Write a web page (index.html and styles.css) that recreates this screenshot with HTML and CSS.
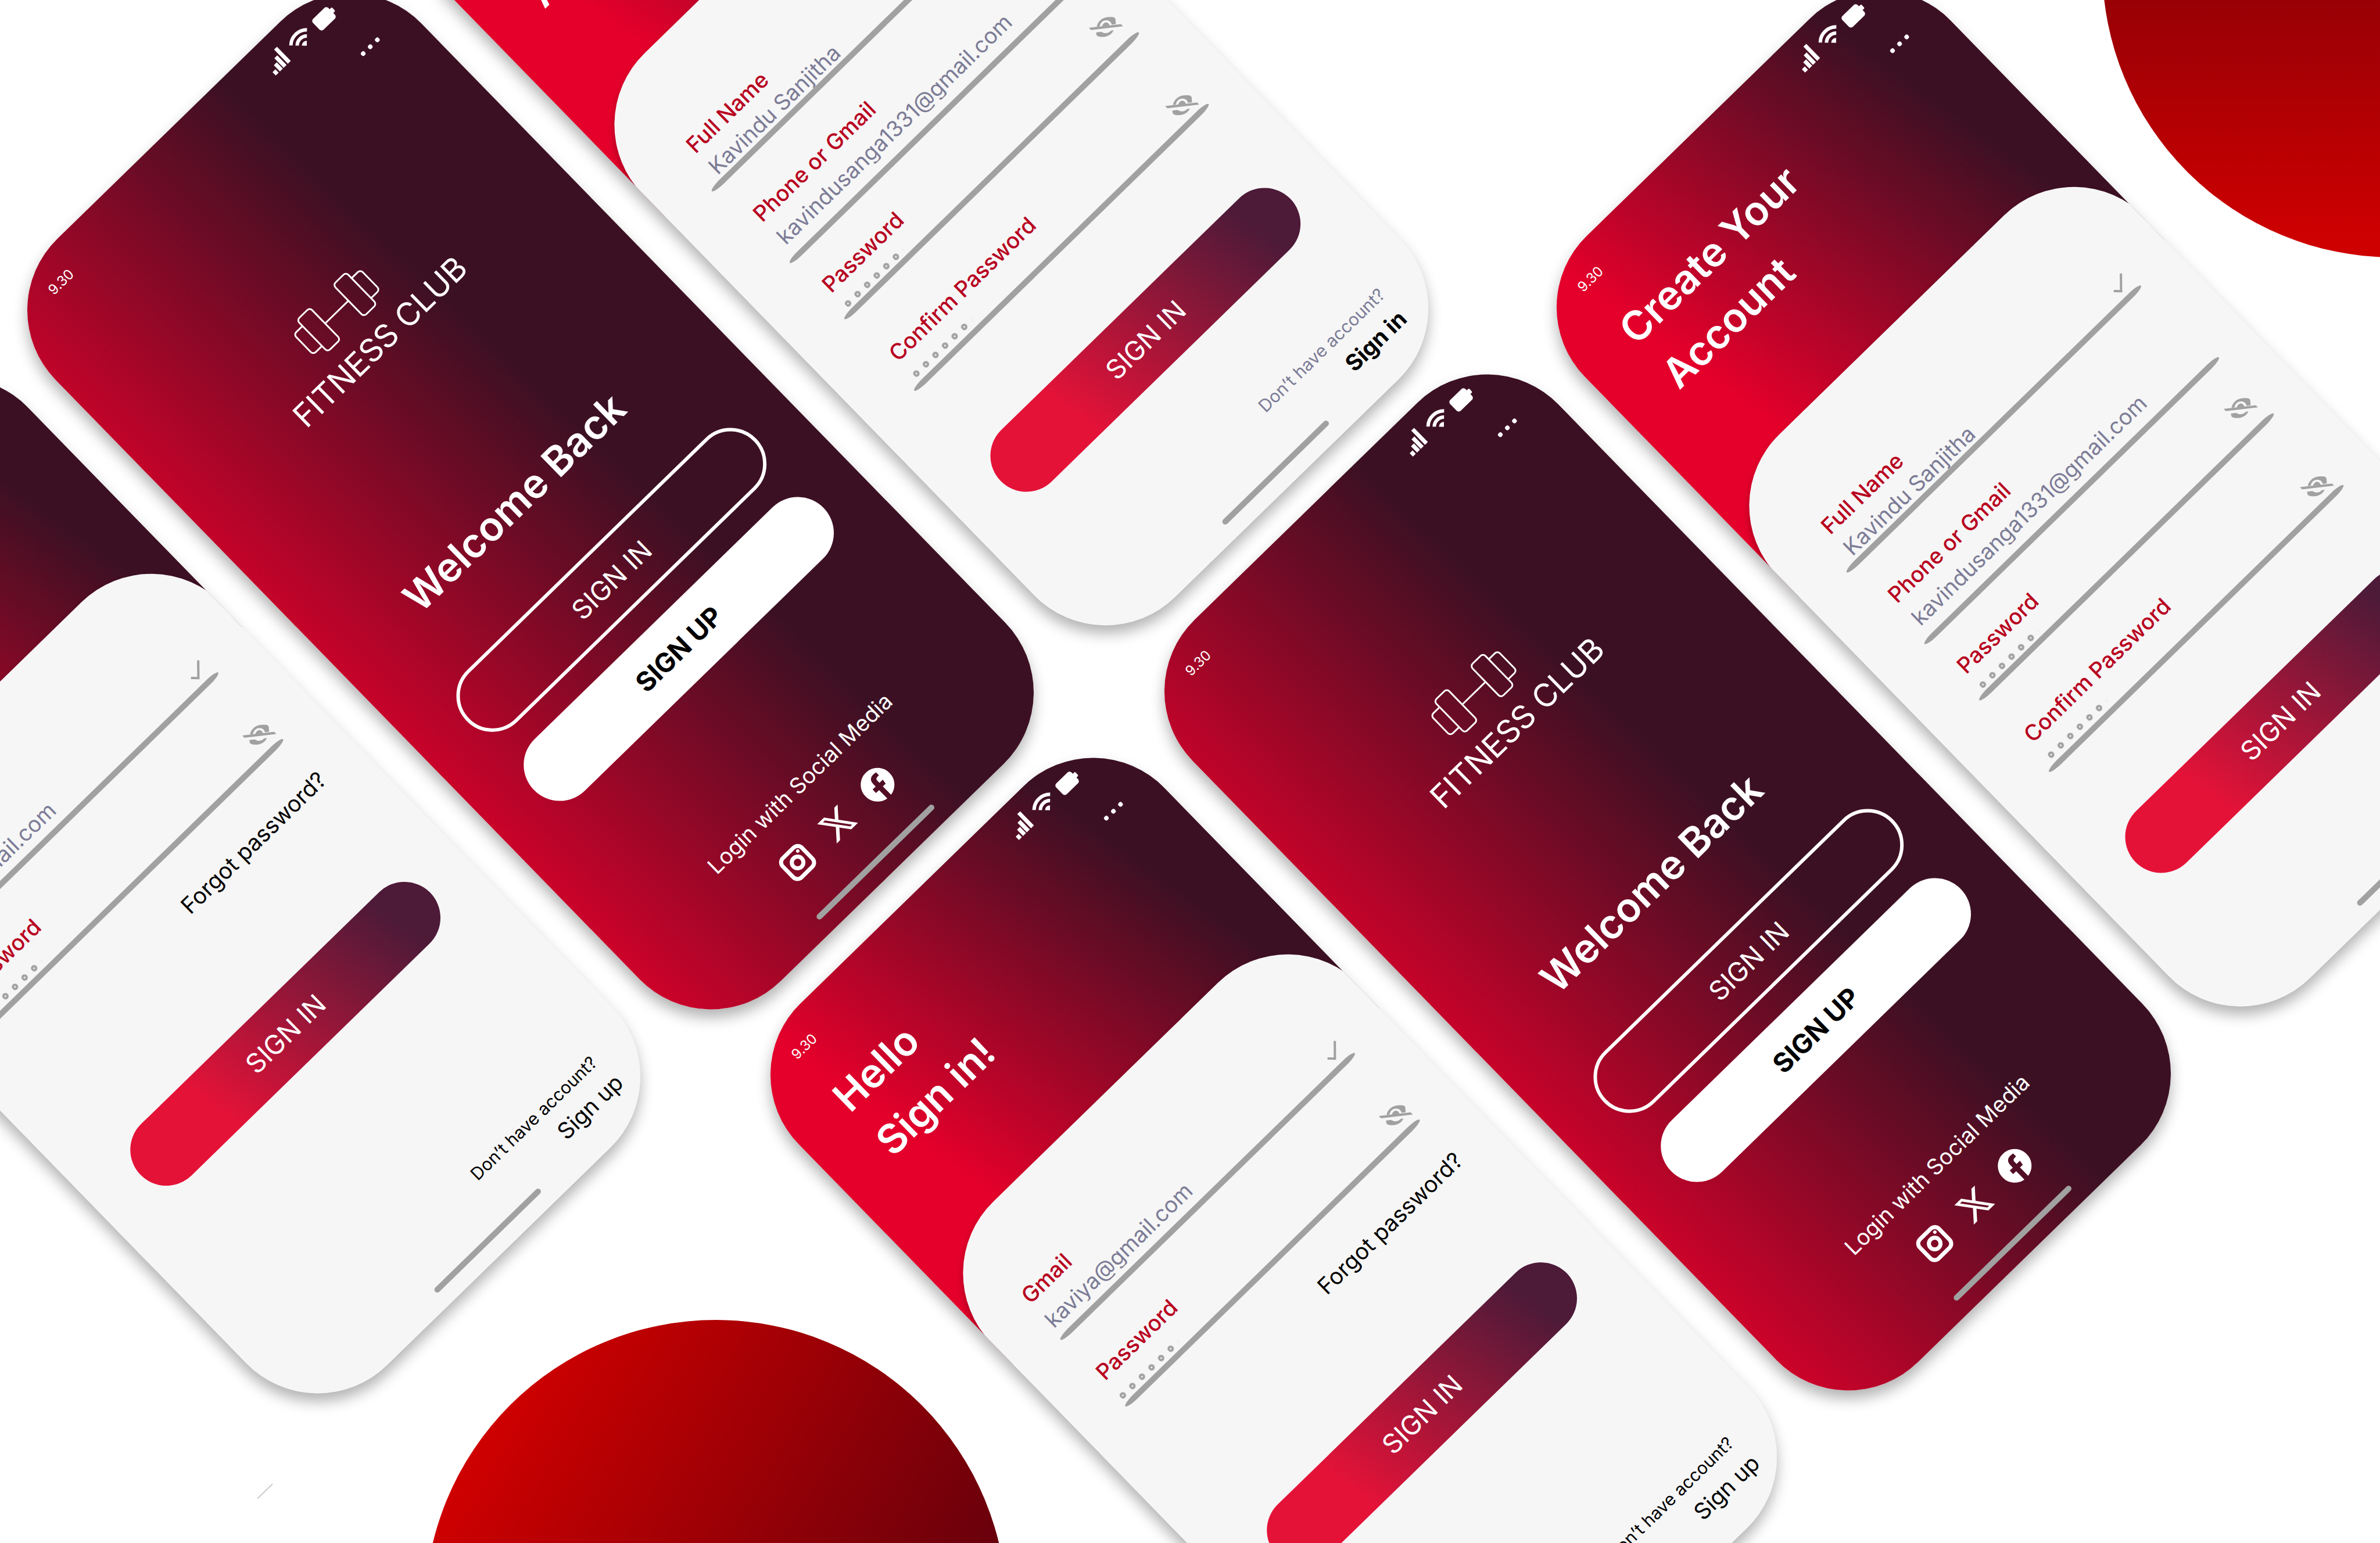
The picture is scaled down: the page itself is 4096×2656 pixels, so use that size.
FILE: index.html
```html
<!DOCTYPE html>
<html lang="en">
<head>
<meta charset="utf-8">
<meta name="viewport" content="width=device-width, initial-scale=1">
<title>Fitness Club</title>
<link rel="stylesheet" href="styles.css">
</head>
<body>
<svg class="sprite" aria-hidden="true">
  <symbol id="i-status" viewBox="0 0 154 38">
    <path fill="currentColor" d="M1 27h7v8H1zM11 20h7v15h-7zM20 12h7v23h-7zM30 1h7v34h-7zM75 35.500L69 29.500A8.500 8.500 0 0 1 81 29.500Z"/>
    <path fill="none" stroke="currentColor" stroke-width="6" d="M55.700 16.200A27.300 27.300 0 0 1 94.300 16.200M63.300 23.800A16.500 16.500 0 0 1 86.700 23.800"/>
    <rect x="110" y="10" width="37" height="26" rx="5" fill="currentColor"/>
    <rect x="145" y="18" width="7" height="9" rx="2" fill="currentColor"/>
  </symbol>
  <symbol id="i-more" viewBox="0 0 42 8">
    <circle cx="4" cy="4" r="4" fill="currentColor"/><circle cx="21" cy="4" r="4" fill="currentColor"/><circle cx="38" cy="4" r="4" fill="currentColor"/>
  </symbol>
  <symbol id="i-dumbbell" viewBox="0 0 164 80">
    <g fill="none" stroke="currentColor" stroke-width="3">
      <path d="M23 16H8a6 6 0 0 0-6 6v36a6 6 0 0 0 6 6h15M141 16h15a6 6 0 0 1 6 6v36a6 6 0 0 1-6 6h-15M54 40h56"/>
      <rect x="23" y="2" width="31" height="76" rx="6"/><rect x="110" y="2" width="31" height="76" rx="6"/>
    </g>
  </symbol>
  <symbol id="i-instagram" viewBox="0 0 58 58">
    <rect x="6" y="6" width="46" height="46" rx="10" fill="none" stroke="currentColor" stroke-width="7"/>
    <circle cx="29" cy="29" r="10" fill="none" stroke="currentColor" stroke-width="7"/>
    <circle cx="43" cy="15" r="3" fill="currentColor"/>
  </symbol>
  <symbol id="i-x" viewBox="0 0 24 24">
    <path fill="currentColor" d="M18.244 2.250h3.308l-7.227 8.260 8.502 11.240H16.170l-5.214-6.817L4.990 21.750H1.680l7.730-8.835L1.254 2.250H8.080l4.713 6.231zm-1.161 17.520h1.833L7.084 4.126H5.117z"/>
  </symbol>
  <symbol id="i-facebook" viewBox="0 0 24 24">
    <path fill="currentColor" d="M24 12.073c0-6.627-5.373-12-12-12s-12 5.373-12 12c0 5.990 4.388 10.954 10.125 11.854v-8.385H7.078v-3.470h3.047V9.430c0-3.007 1.792-4.669 4.533-4.669 1.312 0 2.686.235 2.686.235v2.953H15.830c-1.491 0-1.956.925-1.956 1.874v2.250h3.328l-.532 3.470h-2.796v8.385C19.612 23.027 24 18.062 24 12.073z"/>
  </symbol>
  <symbol id="i-check" viewBox="0 0 44 44">
    <path fill="none" stroke="currentColor" stroke-width="4" d="M6 23l9 9 21-22"/>
  </symbol>
  <symbol id="i-eye-off" viewBox="0 0 44 44">
    <g transform="translate(22 22) rotate(44) scale(.32)" fill="currentColor">
      <path d="M-50-2C-42-38-12-54 18-54C36-54 50-53 51-42L53-16L31-13C28-28 16-36 1-36C-18-36-31-22-34-4Z"/>
      <path d="M-22-3C-18-16-8-25 0-25C10-25 16-18 20-8Z"/>
      <path d="M-53 28L-24 25C-12 36 14 36 26 20L41 17C30 42 5 53-20 53C-32 53-44 52-50 45C-52 40-53 34-53 28Z"/>
      <path d="M-90 10L90-10" fill="none" stroke="currentColor" stroke-width="13"/>
    </g>
  </symbol>
</svg>

<main class="stage">
  <div class="orb orb-top"></div>
  <div class="orb orb-bottom"></div>
  <div class="tick"></div>

  <section class="phone welcome at-a">
    <div class="status"><span class="time">9.30</span><svg class="status-icons" aria-hidden="true"><use href="#i-status"/></svg></div>
    <header class="head"><button class="more" type="button" aria-label="More"><svg><use href="#i-more"/></svg></button></header>
    <div class="brand"><svg class="dumbbell" aria-hidden="true"><use href="#i-dumbbell"/></svg><p class="brand-name">FITNESS CLUB</p></div>
    <h1 class="title">Welcome Back</h1>
    <button class="pill pill-outline" type="button">SIGN IN</button>
    <button class="pill pill-solid" type="button">SIGN UP</button>
    <p class="social-label">Login with Social Media</p>
    <nav class="social">
      <a href="#instagram" aria-label="Instagram"><svg><use href="#i-instagram"/></svg></a>
      <a href="#x" aria-label="X"><svg><use href="#i-x"/></svg></a>
      <a href="#facebook" aria-label="Facebook"><svg><use href="#i-facebook"/></svg></a>
    </nav>
    <div class="home-bar"></div>
  </section>

  <section class="phone welcome at-b">
    <div class="status"><span class="time">9.30</span><svg class="status-icons" aria-hidden="true"><use href="#i-status"/></svg></div>
    <header class="head"><button class="more" type="button" aria-label="More"><svg><use href="#i-more"/></svg></button></header>
    <div class="brand"><svg class="dumbbell" aria-hidden="true"><use href="#i-dumbbell"/></svg><p class="brand-name">FITNESS CLUB</p></div>
    <h1 class="title">Welcome Back</h1>
    <button class="pill pill-outline" type="button">SIGN IN</button>
    <button class="pill pill-solid" type="button">SIGN UP</button>
    <p class="social-label">Login with Social Media</p>
    <nav class="social">
      <a href="#instagram" aria-label="Instagram"><svg><use href="#i-instagram"/></svg></a>
      <a href="#x" aria-label="X"><svg><use href="#i-x"/></svg></a>
      <a href="#facebook" aria-label="Facebook"><svg><use href="#i-facebook"/></svg></a>
    </nav>
    <div class="home-bar"></div>
  </section>

  <section class="phone carded at-c">
    <div class="status"><span class="time">9.30</span><svg class="status-icons" aria-hidden="true"><use href="#i-status"/></svg></div>
    <header class="head"><h1 class="title">Hello<br>Sign in!</h1><button class="more" type="button" aria-label="More"><svg><use href="#i-more"/></svg></button></header>
    <form class="sheet signin">
      <div class="field mail"><label for="c-mail">Gmail</label><input id="c-mail" type="email" value="kaviya@gmail.com"><svg class="mark" aria-hidden="true"><use href="#i-check"/></svg></div>
      <div class="field secret"><label for="c-pass">Password</label><input id="c-pass" type="password" value="123456"><button class="mark" type="button" aria-label="Show password"><svg><use href="#i-eye-off"/></svg></button></div>
      <a class="forgot" href="#forgot">Forgot password?</a>
      <button class="pill pill-gradient" type="submit">SIGN IN</button>
      <footer class="foot"><span>Don’t have account?</span><a href="#signup">Sign up</a></footer>
      <div class="home-bar"></div>
    </form>
  </section>

  <section class="phone carded at-d">
    <div class="status"><span class="time">9.30</span><svg class="status-icons" aria-hidden="true"><use href="#i-status"/></svg></div>
    <header class="head"><h1 class="title">Hello<br>Sign in!</h1><button class="more" type="button" aria-label="More"><svg><use href="#i-more"/></svg></button></header>
    <form class="sheet signin">
      <div class="field mail"><label for="d-mail">Gmail</label><input id="d-mail" type="email" value="kaviya@gmail.com"><svg class="mark" aria-hidden="true"><use href="#i-check"/></svg></div>
      <div class="field secret"><label for="d-pass">Password</label><input id="d-pass" type="password" value="123456"><button class="mark" type="button" aria-label="Show password"><svg><use href="#i-eye-off"/></svg></button></div>
      <a class="forgot" href="#forgot">Forgot password?</a>
      <button class="pill pill-gradient" type="submit">SIGN IN</button>
      <footer class="foot"><span>Don’t have account?</span><a href="#signup">Sign up</a></footer>
      <div class="home-bar"></div>
    </form>
  </section>

  <section class="phone carded at-e">
    <div class="status"><span class="time">9.30</span><svg class="status-icons" aria-hidden="true"><use href="#i-status"/></svg></div>
    <header class="head"><h1 class="title">Create Your<br>Account</h1><button class="more" type="button" aria-label="More"><svg><use href="#i-more"/></svg></button></header>
    <form class="sheet create">
      <div class="field name"><label for="e-name">Full Name</label><input id="e-name" type="text" value="Kavindu Sanjitha"><svg class="mark" aria-hidden="true"><use href="#i-check"/></svg></div>
      <div class="field mail"><label for="e-mail">Phone or Gmail</label><input id="e-mail" type="text" value="kavindusanga1331@gmail.com"></div>
      <div class="field secret"><label for="e-pass">Password</label><input id="e-pass" type="password" value="123456"><button class="mark" type="button" aria-label="Show password"><svg><use href="#i-eye-off"/></svg></button></div>
      <div class="field secret confirm"><label for="e-conf">Confirm Password</label><input id="e-conf" type="password" value="123456"><button class="mark" type="button" aria-label="Show password"><svg><use href="#i-eye-off"/></svg></button></div>
      <button class="pill pill-gradient" type="submit">SIGN IN</button>
      <footer class="foot"><span>Don’t have account?</span><a href="#signin">Sign in</a></footer>
      <div class="home-bar"></div>
    </form>
  </section>

  <section class="phone carded at-f">
    <div class="status"><span class="time">9.30</span><svg class="status-icons" aria-hidden="true"><use href="#i-status"/></svg></div>
    <header class="head"><h1 class="title">Create Your<br>Account</h1><button class="more" type="button" aria-label="More"><svg><use href="#i-more"/></svg></button></header>
    <form class="sheet create">
      <div class="field name"><label for="f-name">Full Name</label><input id="f-name" type="text" value="Kavindu Sanjitha"><svg class="mark" aria-hidden="true"><use href="#i-check"/></svg></div>
      <div class="field mail"><label for="f-mail">Phone or Gmail</label><input id="f-mail" type="text" value="kavindusanga1331@gmail.com"></div>
      <div class="field secret"><label for="f-pass">Password</label><input id="f-pass" type="password" value="123456"><button class="mark" type="button" aria-label="Show password"><svg><use href="#i-eye-off"/></svg></button></div>
      <div class="field secret confirm"><label for="f-conf">Confirm Password</label><input id="f-conf" type="password" value="123456"><button class="mark" type="button" aria-label="Show password"><svg><use href="#i-eye-off"/></svg></button></div>
      <button class="pill pill-gradient" type="submit">SIGN IN</button>
      <footer class="foot"><span>Don’t have account?</span><a href="#signin">Sign in</a></footer>
      <div class="home-bar"></div>
    </form>
  </section>
</main>
</body>
</html>
```

FILE: styles.css
```css
* { box-sizing: border-box; }

body {
  margin: 0;
  background: #fff;
  font-family: Inter, "Liberation Sans", sans-serif;
}

h1, p { margin: 0; }
a { color: inherit; text-decoration: none; }
svg { display: block; }

button {
  padding: 0;
  border: 0;
  background: none;
  color: inherit;
  font: inherit;
}

.sprite { display: none; }

.stage {
  position: relative;
  width: 100%;
  height: 100vh;
  overflow: hidden;
}

/* background shapes */
.orb {
  position: absolute;
  width: 1002px;
  height: 1002px;
  border-radius: 50%;
  transform: translate(-50%, -50%);
}

.orb-top {
  left: 100.56%;
  top: -2.18%;
  background: linear-gradient(180deg, #50000e 0%, #cf0000 98%);
}

.orb-bottom {
  left: 30.08%;
  top: 104.4%;
  background: linear-gradient(120deg, #d10000 12%, #52000e 90%);
}

.tick {
  position: absolute;
  left: 10.7%;
  top: 96.6%;
  width: 36px;
  height: 2px;
  background: #ccc;
  transform: rotate(-44deg);
}

/* phones laid on the canvas */
.phone {
  position: absolute;
  display: flex;
  flex-direction: column;
  width: 879px;
  height: 1784px;
  border-radius: 172px;
  overflow: hidden;
  color: #fff;
  transform: translate(-50%, -50%) rotate(-44.25deg);
  box-shadow: -10px 10px 24px rgba(0, 0, 0, .3);
}

.at-a { left: 22.29%; top: 32.5%; }
.at-b { left: 70.06%; top: 57.19%; }
.at-c { left: 53.51%; top: 82.03%; }
.at-d { left: 5.77%; top: 57.39%; }
.at-e { left: 86.54%; top: 32.3%; }
.at-f { left: 38.87%; top: 7.62%; }

.welcome { background: linear-gradient(88deg, #e4002b -10%, #3c1023 66%); }

.carded { background: #f6f6f6 linear-gradient(80deg, #e4002b 22%, #3c1023 84%) 0 0 / 100% 700px no-repeat; }

.status {
  display: flex;
  justify-content: space-between;
  align-items: flex-start;
  padding: 26px 89px 0 99px;
}

.time {
  padding-top: 14px;
  font-size: 24px;
  line-height: 36px;
}

.status-icons { width: 154px; height: 38px; }

.head {
  display: flex;
  justify-content: space-between;
  align-items: flex-start;
  margin-top: 30px;
  padding: 0 70px 0 100px;
}

.more {
  margin: 29px 0 0 auto;
  height: 8px;
}

.more svg { width: 42px; height: 8px; }

.title {
  font-size: 70px;
  line-height: 106px;
  font-weight: 600;
}

.carded .head { margin-top: 42px; }
.carded .more { margin-top: 17px; }

/* welcome screen */
.brand {
  margin: 243px 0 0 250px;
}

.dumbbell {
  width: 164px;
  height: 80px;
  margin-left: 96px;
}

.brand-name {
  margin-top: 16px;
  font-size: 55px;
  line-height: 64px;
}

.welcome .title {
  margin: 275px 0 0 168px;
}

.pill {
  flex: none;
  width: 696px;
  height: 124px;
  margin-left: 97px;
  border-radius: 62px;
  font-size: 46px;
  text-align: center;
}

.pill-outline {
  margin-top: 97px;
  border: 6px solid #fff;
}

.pill-solid {
  margin-top: 42px;
  background: #fff;
  color: #000;
  font-weight: 700;
}

.social-label {
  margin: 225px 0 0 220px;
  font-size: 38px;
  line-height: 48px;
}

.social {
  display: flex;
  gap: 38px;
  margin: 42px 0 0 306px;
}

.social svg { width: 58px; height: 58px; }

.home-bar {
  width: 279px;
  height: 10px;
  margin: auto 0 28px 292px;
  border-radius: 5px;
  background: #a1a1a1;
}

/* sheet with the form */
.sheet {
  flex: 1;
  display: flex;
  flex-direction: column;
  align-items: flex-start;
  margin: 146px -4px 0 -1px;
  border-radius: 172px;
  background: #f6f6f6;
  color: #000;
  box-shadow: -6px 6px 12px rgba(0, 0, 0, .25);
}

.field {
  display: grid;
  grid-template-columns: 1fr auto;
  width: 707px;
  margin-left: 89px;
}

.field::after {
  content: "";
  grid-column: 1 / -1;
  height: 10px;
  border-radius: 24px / 5px;
  background: #a1a1a1;
}

.field label {
  color: #b80020;
  font-size: 38px;
  line-height: 44px;
  font-weight: 500;
}

.field input {
  grid-column: 1;
  width: 100%;
  height: 41px;
  margin-top: 16px;
  padding: 0;
  border: 0;
  outline: 0;
  background: none;
  color: #7c7c96;
  font: 400 38px/41px Inter, "Liberation Sans", sans-serif;
}

/* six small rings stand in for the hidden characters */
.field.secret input {
  width: 138px;
  height: 23px;
  margin-top: 19px;
  color: transparent;
  font-size: 16px;
  line-height: 23px;
  background: radial-gradient(circle at 5px 50%, transparent 1px, #a1a1a1 2px, #a1a1a1 5px, transparent 6px) 0 0 / 23px 100% repeat-x;
}

.mark {
  grid-column: 2;
  grid-row: 1 / 3;
  align-self: end;
  width: 44px;
  height: 44px;
  margin-right: 2px;
  color: #a1a1a1;
}

.mark svg { width: 44px; height: 44px; }

.signin .mail { margin-top: 136px; }
.signin .mail input { margin-bottom: 9px; }
.signin .secret { margin-top: 64px; }
.signin label, .signin input { margin-left: 5px; }
.signin .secret .mark { margin-bottom: 7px; }

.create .field { margin-left: 99px; }
.create label { padding-top: 5px; }
.create label, .create input { margin-left: 14px; }
.create .mark { margin-right: 12px; }
.create .secret input { height: 20px; margin: 14px 0 0 18px; }
.create .secret .mark { margin-bottom: 19px; }
.create .name { margin: 145px 0 0 89px; }
.create .name label { margin-left: 24px; }
.create .name input { margin: 11px 0 0 26px; }
.create .name .mark { margin-right: 2px; }
.create .mail { margin-top: 54px; }
.create .mail input { margin: 14px 0; margin-left: 16px; }
.create .secret { margin-top: 42px; }
.create .confirm { margin-top: 72px; }
.create .confirm input { height: 27px; }
.create .confirm .mark { margin-bottom: 3px; }

.forgot {
  align-self: flex-end;
  margin: 65px 84px 0 0;
  font-size: 39px;
  line-height: 44px;
}

.pill-gradient {
  background: linear-gradient(80deg, #e51238 25%, #4d1a38 88%);
  color: #fff;
}

.signin .pill { margin-top: 190px; }
.create .pill { margin-top: 148px; }

.foot {
  display: flex;
  flex-direction: column;
  gap: 14px;
  margin: auto 0 15px 505px;
  font-size: 30px;
  line-height: 36px;
}

.foot a {
  margin-left: 158px;
  font-size: 39px;
  line-height: 44px;
}

.create .foot span { color: #7c7c96; }
.create .foot a { font-weight: 700; }

.sheet .home-bar {
  width: 252px;
  margin: 0 0 28px 320px;
}
```
